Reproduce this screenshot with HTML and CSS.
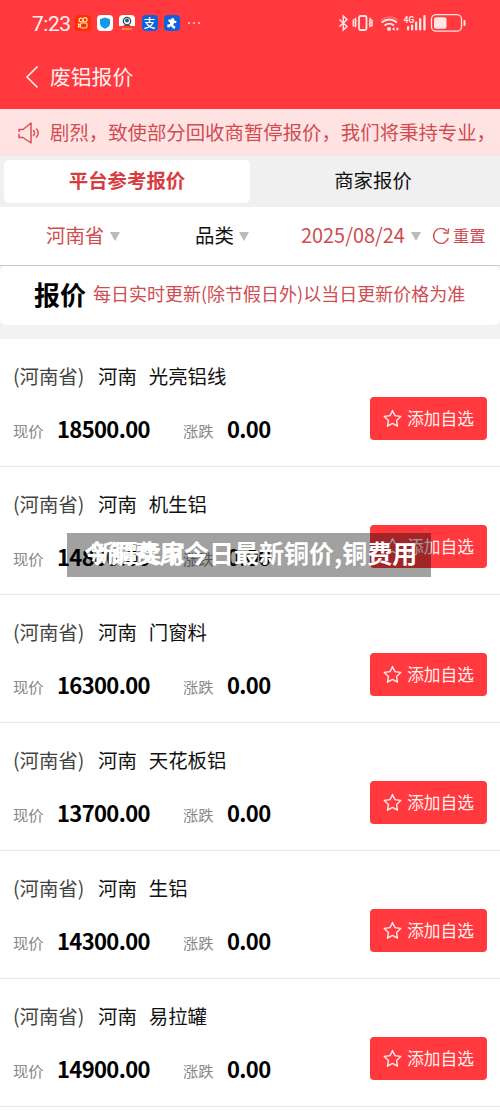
FILE: index.html
```html
<!DOCTYPE html>
<html lang="zh-CN">
<head>
<meta charset="utf-8">
<title>废铝报价</title>
<link rel="stylesheet" href="styles.css">
</head>
<body>
<svg class="defs" aria-hidden="true">
  <symbol id="star" viewBox="0 0 20 20"><path d="M10 1.500l2.600 5.500 6.100.8-4.500 4.200 1.100 6.100-5.300-2.900-5.300 2.900 1.100-6.100-4.500-4.200 6.100-.8z" fill="none" stroke="currentColor" stroke-width="1.400" stroke-linejoin="round"/></symbol>
</svg>
<header class="top">
  <div class="status">
    <span class="clock">7:23</span>
    <div class="apps">
      <svg class="app" viewBox="0 0 16 16"><rect width="16" height="16" rx="4" fill="#ff3000"/><g fill="none" stroke="#ffe2b0" stroke-width="1.200"><circle cx="6" cy="5" r="1.900"/><circle cx="10" cy="4.800" r="2.100"/><rect x="5.500" y="8" width="6.500" height="5" rx="1.500"/><path d="M5.500 10l-2-1v3l2-1"/></g></svg>
      <svg class="app" viewBox="0 0 16 16"><rect width="16" height="16" rx="4" fill="#fff"/><path d="M8 2.500l5 1.800v4.200c0 2.500-2.500 4.200-5 5.300-2.500-1.100-5-2.800-5-5.300V4.300z" fill="#1598e8"/></svg>
      <svg class="app" viewBox="0 0 16 16"><path d="M0 11V4a4 4 0 014-4h8a4 4 0 014 4v7z" fill="#fff"/><circle cx="8" cy="6" r="3.700" fill="#fff" stroke="#345" stroke-width="1.200"/><circle cx="8" cy="5.500" r="2" fill="#168"/><path d="M4 11q4-4 8 0z" fill="#654"/><path d="M3 14h10" stroke="#ff9a30" stroke-width="2" stroke-dasharray="2 .6"/></svg>
      <span class="app pay">支</span>
      <svg class="app" viewBox="0 0 16 16"><rect width="16" height="16" rx="4" fill="#1260dc"/><path d="M4 5h2.500a1.600 1.600 0 113 0H12v2.500a1.600 1.600 0 100 2.800V13H9.500a1.500 1.500 0 10-3 0H4v-3a1.500 1.500 0 100-2.600z" fill="#fff" transform="rotate(12 8 8)"/></svg>
    </div>
    <span class="more"><i></i><i></i><i></i></span>
    <svg class="signals" viewBox="0 0 130 22" fill="none" stroke="#ffe5e5" stroke-width="1.500">
      <path d="M1.500 7.500l7.500 7-3.700 3.500V4l3.700 3.500-7.500 7"/>
      <rect x="21" y="4" width="7.500" height="14" rx="1.500" stroke-width="1.800"/>
      <path d="M18 6l-1 1.500 1 1.500-1 1.500 1 1.500-1 1.500 1 1.500M15.300 7.500v7M31.500 6l1 1.500-1 1.500 1 1.500-1 1.500 1 1.500-1 1.500M34 7.500v7"/>
      <path d="M43 8q8.500-6 17 0" opacity=".3"/><path d="M43.500 10.500q8-6 15.500 0" stroke-width="1.800"/><path d="M46.500 13.500q5-3.700 9.500 0" stroke-width="1.800"/><circle cx="51" cy="17" r="2" fill="#ffe5e5" stroke="none"/><path d="M54 17l2.500-1.900v3.800zM61 17l-2.500-1.900v3.800z" fill="#ffe5e5" stroke="none"/>
      <g fill="#ffe5e5" stroke="none"><text x="65.500" y="10.500" class="gen">4G</text><rect x="69" y="14" width="2.200" height="4.500" rx="1"/><rect x="73" y="12.500" width="2.200" height="6" rx="1"/><rect x="77" y="9.500" width="2.300" height="9" rx="1"/><rect x="81" y="6" width="2.300" height="12.500" rx="1"/><rect x="85.300" y="3" width="2.300" height="15.500" rx="1"/></g>
      <rect x="93.500" y="2.700" width="30" height="16.500" rx="4.500" stroke-width="1.300"/><rect x="96" y="5.200" width="12.500" height="11.500" rx="2" fill="#ffe5e5" stroke="none"/><path d="M126.500 9v4" stroke-width="2" stroke-linecap="round"/>
    </svg>
  </div>
  <div class="nav">
    <svg class="back" viewBox="0 0 14 24"><path d="M12.500 1.500L2 12l10.500 10.500" fill="none" stroke="#fff0f0" stroke-width="1.700"/></svg>
    <h1>废铝报价</h1>
  </div>
</header>
<div class="notice">
  <svg class="speaker" viewBox="0 0 22 22" fill="none" stroke="#d95157" stroke-width="1.500" stroke-linejoin="round" stroke-linecap="round"><path d="M1 7.500h4L13 1v20l-8-5.500H1v-3M1 7.500v2M15.500 8.500q2 2.500 0 5M18.500 7q3.400 4 0 8"/></svg>
  <span>剧烈，致使部分回收商暂停报价，我们将秉持专业，</span>
</div>
<nav class="tabs"><div class="tab active">平台参考报价</div><div class="tab">商家报价</div></nav>
<div class="filters">
  <span class="filter province">河南省<i class="caret"></i></span>
  <span class="filter kind">品类<i class="caret"></i></span>
  <span class="filter date">2025/08/24<i class="caret"></i></span>
  <span class="reset"><svg viewBox="0 0 18 18" fill="none" stroke="#d04c50" stroke-width="1.400"><path d="M15 4.200A7.500 7.500 0 1016.300 11M16.600 1.500l-.6 4.700-4.700-.5"/></svg>重置</span>
</div>
<div class="banner-wrap"><div class="banner"><strong>报价</strong><span>每日实时更新(除节假日外)以当日更新价格为准</span></div></div>
<main>
  <article class="row"><div class="name"><span class="area">(河南省)</span><span>河南</span><span>光亮铝线</span></div><div class="price"><small>现价</small><b class="now">18500.00</b><small>涨跌</small><b>0.00</b></div><button><svg><use href="#star"/></svg>添加自选</button></article>
  <article class="row"><div class="name"><span class="area">(河南省)</span><span>河南</span><span>机生铝</span></div><div class="price"><small>现价</small><b class="now">14800.00</b><small>涨跌</small><b>0.00</b></div><button><svg><use href="#star"/></svg>添加自选</button></article>
  <article class="row"><div class="name"><span class="area">(河南省)</span><span>河南</span><span>门窗料</span></div><div class="price"><small>现价</small><b class="now">16300.00</b><small>涨跌</small><b>0.00</b></div><button><svg><use href="#star"/></svg>添加自选</button></article>
  <article class="row"><div class="name"><span class="area">(河南省)</span><span>河南</span><span>天花板铝</span></div><div class="price"><small>现价</small><b class="now">13700.00</b><small>涨跌</small><b>0.00</b></div><button><svg><use href="#star"/></svg>添加自选</button></article>
  <article class="row"><div class="name"><span class="area">(河南省)</span><span>河南</span><span>生铝</span></div><div class="price"><small>现价</small><b class="now">14300.00</b><small>涨跌</small><b>0.00</b></div><button><svg><use href="#star"/></svg>添加自选</button></article>
  <article class="row"><div class="name"><span class="area">(河南省)</span><span>河南</span><span>易拉罐</span></div><div class="price"><small>现价</small><b class="now">14900.00</b><small>涨跌</small><b>0.00</b></div><button><svg><use href="#star"/></svg>添加自选</button></article>
</main>
<div class="caption"><span class="under">新疆卖家</span><span class="line">今铜费用今日最新铜价,铜费用</span></div>
</body>
</html>
```
FILE: styles.css
```css
* { box-sizing: border-box; }
body { margin: 0; width: 500px; height: 1111px; overflow: hidden; position: relative; background: #fff; color: #111; font-family: "Noto Sans CJK SC", sans-serif; font-size: 19.4px; white-space: nowrap; }
.defs { display: none; }
.top { height: 109px; background: #ff393e; color: #fff0f0; }
.status { height: 46px; display: flex; align-items: center; padding-left: 32px; }
.clock { width: 43px; font-family: Roboto, sans-serif; font-size: 21px; letter-spacing: -.5px; padding-top: 1px; }
.apps { display: flex; gap: 6.200px; }
.app { width: 16px; height: 16px; display: block; }
.pay { background: #1260dc; border-radius: 4px; color: #fff; font-size: 12px; line-height: 15px; text-align: center; font-weight: 500; }
.more { display: flex; gap: 2.500px; margin-left: 8px; }
.more i { width: 2.500px; height: 2.500px; border-radius: 50%; background: #ffd0d0; }
.signals { width: 130px; height: 22px; margin-left: auto; margin-right: 32px; }
.gen { font: 700 8.500px Roboto, sans-serif; }
.nav { display: flex; align-items: center; height: 62px; padding-left: 25px; }
.back { width: 14px; height: 24px; margin-right: 11px; }
h1 { margin: 0; font-size: 20.800px; font-weight: 400; line-height: 30px; padding-bottom: 2px; }
.notice { height: 47px; background: #ffe3e3; color: #d04c50; display: flex; align-items: center; padding-left: 18px; overflow: hidden; }
.notice span { padding-bottom: 2px; }
.speaker { width: 22px; height: 22px; flex: none; margin-right: 10px; }
.tabs { height: 51px; background: #f0f0f0; padding: 4px 4px; display: flex; }
.tab { width: 246px; height: 43px; line-height: 40px; text-align: center; border-radius: 5px; }
.active { background: #fff; color: #d83c40; font-weight: 700; }
.filters { height: 59px; display: flex; align-items: center; border-bottom: 1px solid #ccc; color: #d04c50; padding-left: 46px; padding-bottom: 3px; }
.filter { display: flex; align-items: center; gap: 6px; }
.province { width: 149px; }
.kind { width: 106px; color: #111; gap: 5px; }
.date { width: 131px; font-size: 19.900px; }
.caret { border: 5px solid transparent; border-top: 9px solid #bbb; border-bottom: 0; margin-top: 4px; }
.reset { display: flex; align-items: center; font-size: 16.300px; gap: 3px; }
.reset svg { width: 18px; height: 18px; margin-top: 2px; }
.banner-wrap { height: 73px; background: #f2f2f2; padding-bottom: 14px; }
.banner { height: 59px; background: #fff; border-radius: 6px; display: flex; align-items: center; padding: 0 0 4px 34px; }
.banner strong { font-size: 26px; width: 59px; color: #000; }
.banner span { color: #d04c50; font-size: 18px; padding-bottom: 1px; }
.row { height: 128px; border-bottom: 1px solid #e8e8e8; display: grid; grid-template-columns: 357px 117px; grid-template-rows: 75px 52px; padding-left: 13px; }
.name { grid-column: 1 / 3; display: flex; align-items: center; gap: 12px; padding-bottom: 3px; }
.area { width: 73px; color: #444; }
.price { display: flex; align-items: center; height: 28px; }
small { font-size: 15.300px; color: #888; width: 44px; padding-top: 3px; }
b { font-size: 22px; letter-spacing: -.65px; color: #000; }
.now { width: 126px; }
button { border: 0; border-radius: 4px; background: #ff393e; color: #fff0f0; font: 16.700px/24px "Noto Sans CJK SC", sans-serif; height: 43px; margin-top: -17px; padding: 0 0 2px; display: flex; align-items: center; justify-content: center; gap: 5px; }
button svg { width: 19px; height: 19px; margin-top: 2px; }
.caption { position: absolute; left: 67px; top: 533px; width: 364px; height: 44px; background: rgba(0,0,0,.37); color: #fff; font-weight: 700; font-size: 25px; line-height: 38px; }
.line { display: block; padding-left: 17px; }
.under { position: absolute; left: 24px; top: 0; font-size: 23.500px; }
```
